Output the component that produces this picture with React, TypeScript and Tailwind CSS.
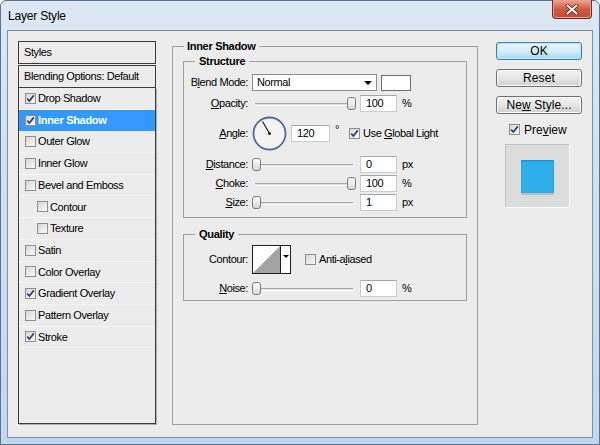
import React from "react";

const font = "font-['Liberation_Sans',Arial,sans-serif]";

const styleRows = [
  { label: "Drop Shadow", checked: true },
  { label: "Inner Shadow", checked: true, selected: true },
  { label: "Outer Glow" },
  { label: "Inner Glow" },
  { label: "Bevel and Emboss" },
  { label: "Contour", nested: true },
  { label: "Texture", nested: true },
  { label: "Satin" },
  { label: "Color Overlay" },
  { label: "Gradient Overlay", checked: true },
  { label: "Pattern Overlay" },
  { label: "Stroke", checked: true },
];

function Check({ checked }: { checked?: boolean }) {
  return (
    <span className="flex h-[11px] w-[11px] shrink-0 items-center justify-center border border-[#8e8f8f] bg-linear-to-br from-[#d6d6d6] to-[#fbfbfb]">
      {checked && (
        <svg width="9" height="9" viewBox="0 0 9 9">
          <path d="M1.2 4.6 L3.4 7 L7.8 1.4" fill="none" stroke="#2b3d73" strokeWidth="1.7" />
        </svg>
      )}
    </span>
  );
}

function Slider({ value }: { value: number }) {
  return (
    <div className="relative h-[13px] w-[104px]">
      <div className="absolute left-[3px] right-[3px] top-[6px] h-[2px] border-t border-[#a9a9a9] bg-[#e0e0e0] shadow-[0_1px_0_#fff]" />
      <div
        className={
          "absolute top-0 h-[13px] w-[9px] rounded-[3px] border border-[#7b7b7b] bg-linear-to-b from-[#fdfdfd] to-[#d9d9d9] " +
          (value > 50 ? "right-0" : "left-0")
        }
      />
    </div>
  );
}

function Field({ value, w = "w-[37px]" }: { value: string; w?: string }) {
  return (
    <div className={`flex h-[17px] ${w} items-center border border-[#c9ccd1] border-t-[#a3a6ab] bg-white pl-[5px] text-[11px]`}>
      {value}
    </div>
  );
}

function Label({ children }: { children: React.ReactNode }) {
  return <div className="w-[64px] shrink-0 text-right text-[11px]">{children}</div>;
}

function SliderRow({ label, value, unit, mt }: { label: React.ReactNode; value: string; unit: string; mt: string }) {
  return (
    <div className={`flex h-[17px] items-center ${mt}`}>
      <Label>{label}</Label>
      <div className="ml-[4px]">
        <Slider value={Number(value)} />
      </div>
      <div className="ml-[4px]">
        <Field value={value} />
      </div>
      <span className="ml-[5px] text-[11px]">{unit}</span>
    </div>
  );
}

function Button({ children, primary }: { children: React.ReactNode; primary?: boolean }) {
  return (
    <div
      className={
        "flex h-[18px] w-[86px] items-center justify-center rounded-[3px] border text-[12px] tracking-[0.1px] " +
        (primary
          ? "border-[#3c7fb1] bg-linear-to-b from-[#e9f6fd] via-[#d5eefb] to-[#a8d9f2] shadow-[inset_0_0_0_1px_#bfe6fa]"
          : "border-[#707070] bg-linear-to-b from-[#f3f3f3] via-[#e6e6e6] to-[#cfcfcf] shadow-[inset_0_0_0_1px_#fcfcfc]")
      }
    >
      <span>{children}</span>
    </div>
  );
}

export default function App() {
  return (
    <div className={`${font} flex h-[445px] w-[600px] flex-col rounded-t-[6px] border border-[#5a7394] bg-linear-to-b from-[#dce8f4] to-[#c2d7ee] text-black`}>
      {/* Title bar */}
      <div className="flex h-[29px] shrink-0 items-start justify-between">
        <span className="pl-[7px] pt-[6px] text-[12px] tracking-[-0.2px] text-black">Layer Style</span>
        <div className="-mt-px mr-[7px] flex h-[19px] w-[40px] items-center justify-center rounded-b-[4px] border border-t-0 border-[#6b2d22] bg-linear-to-b from-[#e7a593] via-[#cf5b45] to-[#c44f37] shadow-[inset_0_0_0_1px_#e9a08f]">
          <svg width="14" height="11" viewBox="0 0 14 11">
            <path d="M2.5 1.5 L11.5 9.5 M11.5 1.5 L2.5 9.5" stroke="#5c1f16" strokeWidth="3.6" strokeLinecap="round" />
            <path d="M2.5 1.5 L11.5 9.5 M11.5 1.5 L2.5 9.5" stroke="#fff" strokeWidth="2" strokeLinecap="round" />
          </svg>
        </div>
      </div>

      {/* Client area */}
      <div className="mx-[6px] mb-[6px] flex flex-1 border border-[#7f90a6] bg-[#ececec] pl-[10px] pt-[10px] tracking-[-0.4px]">
        {/* Styles list */}
        <div className="flex h-[383px] w-[138px] shrink-0 flex-col">
          <div className="flex h-[23px] items-center border border-[#3c3c3c] pl-[5px] text-[11px]">Styles</div>
          <div className="mt-[1px] flex h-[23px] items-center border border-[#3c3c3c] pl-[5px] text-[11px]">Blending Options: Default</div>
          <div className="flex-1 border border-t-0 border-[#3c3c3c] shadow-[1px_1px_0_#b0b0b0]">
            {styleRows.map((r) => (
              <div
                key={r.label}
                className={
                  "flex h-[21.7px] items-center gap-[2px] border-b border-dotted text-[11px] " +
                  (r.nested ? "pl-[18px] " : "pl-[6px] ") +
                  (r.selected ? "border-[#3399ff] bg-[#3399ff] font-bold tracking-[-0.3px] text-white" : "border-[#fdfdfd]")
                }
              >
                <Check checked={r.checked} />
                <span>{r.label}</span>
              </div>
            ))}
          </div>
        </div>

        {/* Inner Shadow panel */}
        <fieldset className="-mt-[1px] ml-[16px] h-[385px] w-[306px] shrink-0 self-start border border-[#a0a0a0]">
          <legend className="ml-[11px] px-[3px] text-[11px] font-bold leading-[13px] tracking-[-0.3px]">Inner Shadow</legend>

          <fieldset className="mx-[10px] mt-[2px] border border-[#a0a0a0] pb-[6px]">
            <legend className="ml-[11px] px-[4px] text-[11px] font-bold leading-[13px] tracking-[-0.3px]">Structure</legend>
            <div className="mt-[6px] flex h-[17px] items-center">
              <Label>
                B<span className="underline underline-offset-[1px]">l</span>end Mode:
              </Label>
              <div className="ml-[4px] flex h-[17px] w-[125px] items-center justify-between border border-[#8e8f8f] bg-white pl-[4px] pr-[4px] text-[11px]">
                <span>Normal</span>
                <svg width="8" height="4" viewBox="0 0 8 4">
                  <path d="M0 0 H8 L4 4 Z" fill="#000" />
                </svg>
              </div>
              <div className="ml-[4px] h-[16px] w-[30px] border border-[#6e6e6e] bg-white" />
            </div>

            <SliderRow
              mt="mt-[4px]"
              label={<><span className="underline underline-offset-[1px]">O</span>pacity:</>}
              value="100"
              unit="%"
            />

            <div className="mt-[3px] flex h-[36px] items-center">
              <Label>
                <span className="underline underline-offset-[1px]">A</span>ngle:
              </Label>
              <svg className="ml-[4px]" width="35" height="35" viewBox="0 0 35 35">
                <circle cx="17.5" cy="17.5" r="16" fill="#f3f3f3" stroke="#56699a" strokeWidth="1.8" />
                <line x1="17.5" y1="17.5" x2="10.5" y2="5.5" stroke="#1c1c1c" strokeWidth="1.2" />
                <circle cx="17.5" cy="17.5" r="1.5" fill="#1c1c1c" />
              </svg>
              <div className="ml-[4px]">
                <Field value="120" w="w-[39px]" />
              </div>
              <span className="-mt-[8px] ml-[5px] text-[11px]">°</span>
              <div className="ml-[10px]">
                <Check checked />
              </div>
              <span className="ml-[3px] text-[11px]">
                Use <span className="underline underline-offset-[1px]">G</span>lobal Light
              </span>
            </div>

            <SliderRow
              mt="mt-[5px]"
              label={<><span className="underline underline-offset-[1px]">D</span>istance:</>}
              value="0"
              unit="px"
            />
            <SliderRow
              mt="mt-[2px]"
              label={<><span className="underline underline-offset-[1px]">C</span>hoke:</>}
              value="100"
              unit="%"
            />
            <SliderRow
              mt="mt-[2px]"
              label={<><span className="underline underline-offset-[1px]">S</span>ize:</>}
              value="1"
              unit="px"
            />
          </fieldset>

          <fieldset className="mx-[10px] mt-[10px] border border-[#a0a0a0] pb-[3px]">
            <legend className="ml-[11px] px-[4px] text-[11px] font-bold leading-[13px] tracking-[-0.3px]">Quality</legend>
            <div className="mt-[4px] flex h-[29px] items-center">
              <Label>Contour:</Label>
              <div className="ml-[4px] flex h-[29px] w-[39px] border border-[#1e1e1e] bg-white">
                <svg width="27" height="27" viewBox="0 0 27 27">
                  <path d="M0 27 L27 0 L27 27 Z" fill="#a3a3a3" />
                </svg>
                <div className="flex flex-1 items-start justify-center border-l border-[#1e1e1e] pt-[9px]">
                  <svg width="6" height="3" viewBox="0 0 6 3">
                    <path d="M0 0 H6 L3 3 Z" fill="#000" />
                  </svg>
                </div>
              </div>
              <div className="ml-[14px]">
                <Check />
              </div>
              <span className="ml-[3px] text-[11px]">
                Anti-a<span className="underline underline-offset-[1px]">l</span>iased
              </span>
            </div>
            <SliderRow
              mt="mt-[6px]"
              label={<><span className="underline underline-offset-[1px]">N</span>oise:</>}
              value="0"
              unit="%"
            />
          </fieldset>
        </fieldset>

        {/* Buttons */}
        <div className="ml-[18px] flex w-[86px] shrink-0 flex-col tracking-normal">
          <div className="mt-[1px]">
            <Button primary>OK</Button>
          </div>
          <div className="mt-[9px]">
            <Button>Reset</Button>
          </div>
          <div className="mt-[9px]">
            <Button>
              Ne<span className="underline underline-offset-[1px]">w</span> Style...
            </Button>
          </div>
          <div className="mt-[9px] flex h-[13px] items-center pl-[13px]">
            <Check checked />
            <span className="ml-[4px] text-[12px]">
              Pre<span className="underline underline-offset-[1px]">v</span>iew
            </span>
          </div>
          <div className="ml-[9px] mt-[8px] flex h-[64px] w-[65px] items-center justify-center border border-[#c4c4c4] border-b-[#fafafa] border-r-[#fafafa] bg-[#dcdcdc]">
            <div className="h-[33px] w-[33px] bg-[#2eaeea] shadow-[0_2px_0_#bdbdbd,inset_0_1px_2px_#1a8cc4]" />
          </div>
        </div>
      </div>
    </div>
  );
}
